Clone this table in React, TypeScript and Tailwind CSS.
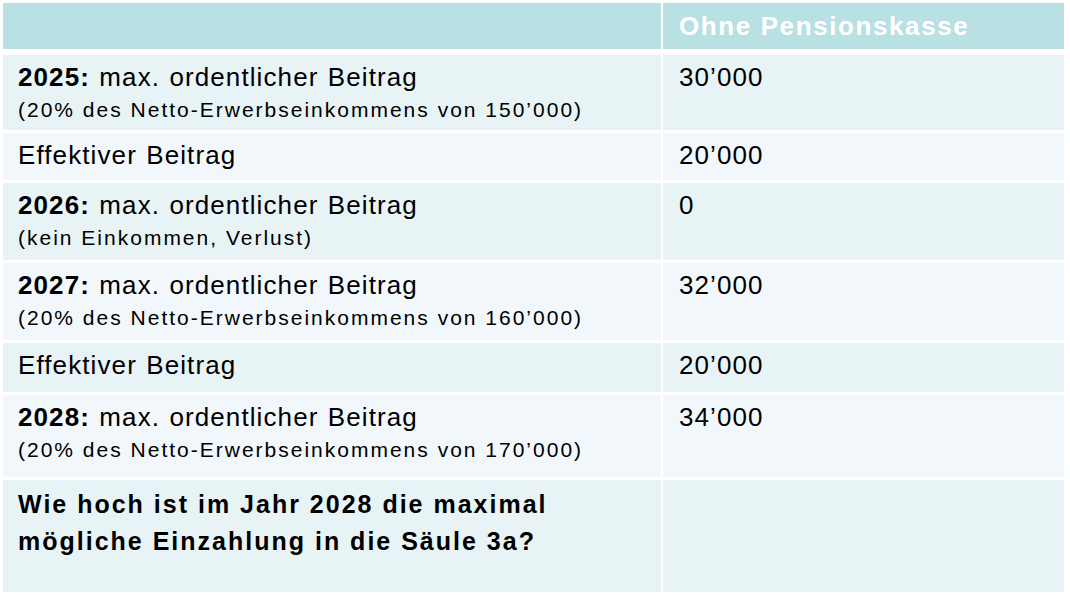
import React from "react";

type Row = {
  year?: string;
  label: string;
  note?: string;
  value: string;
  tone: "a" | "b";
  h: string;
};

const rows: Row[] = [
  { year: "2025:", label: "max. ordentlicher Beitrag", note: "(20% des Netto-Erwerbseinkommens von 150’000)", value: "30’000", tone: "a", h: "h-[75px]" },
  { label: "Effektiver Beitrag", value: "20’000", tone: "b", h: "h-[47px]" },
  { year: "2026:", label: "max. ordentlicher Beitrag", note: "(kein Einkommen, Verlust)", value: "0", tone: "a", h: "h-[77px]" },
  { year: "2027:", label: "max. ordentlicher Beitrag", note: "(20% des Netto-Erwerbseinkommens von 160’000)", value: "32’000", tone: "b", h: "h-[77px]" },
  { label: "Effektiver Beitrag", value: "20’000", tone: "a", h: "h-[49px]" },
  { year: "2028:", label: "max. ordentlicher Beitrag", note: "(20% des Netto-Erwerbseinkommens von 170’000)", value: "34’000", tone: "b", h: "h-[82px]" },
];

export default function App() {
  return (
    <div className="w-[1070px] h-[597px] bg-white pt-[3px] pl-[3px] font-['Liberation_Sans',Arial,sans-serif] text-black">
      <div className="w-[1061px] flex flex-col gap-[3px]">
        {/* header */}
        <div className="grid grid-cols-[658px_401px] gap-[2px] h-[46px] mb-[3px]">
          <div className="bg-[#b9e0e3]" />
          <div className="bg-[#b9e0e3] pl-[16px] flex items-center">
            <span className="text-white font-bold text-[26px] leading-none tracking-[1.6px]">Ohne Pensionskasse</span>
          </div>
        </div>

        {rows.map((r, i) => {
          const bg = r.tone === "a" ? "bg-[#e7f3f5]" : "bg-[#f1f7fa]";
          return (
            <div key={i} className={`grid grid-cols-[658px_401px] gap-[2px] ${r.h}`}>
              <div className={`${bg} pl-[15px] pt-[7px]`}>
                <div className="text-[26px] leading-[30px] tracking-[1.1px] [word-spacing:1px] whitespace-nowrap">
                  {r.year && <span className="font-bold">{r.year} </span>}
                  {r.label}
                </div>
                {r.note && (
                  <div className="mt-[3px] text-[21px] leading-[30px] tracking-[2px] whitespace-nowrap">{r.note}</div>
                )}
              </div>
              <div className={`${bg} pl-[16px] pt-[7px]`}>
                <div className="text-[26px] leading-[30px] tracking-[1.1px]">{r.value}</div>
              </div>
            </div>
          );
        })}

        <div className="grid grid-cols-[658px_401px] gap-[2px] h-[112px]">
          <div className="bg-[#e7f3f5] pl-[15px] pt-[6px]">
            <div className="font-bold text-[25px] leading-[37px] tracking-[2px] whitespace-nowrap">
              Wie hoch ist im Jahr 2028 die maximal
              <br />
              mögliche Einzahlung in die Säule 3a?
            </div>
          </div>
          <div className="bg-[#e7f3f5]" />
        </div>
      </div>
    </div>
  );
}
